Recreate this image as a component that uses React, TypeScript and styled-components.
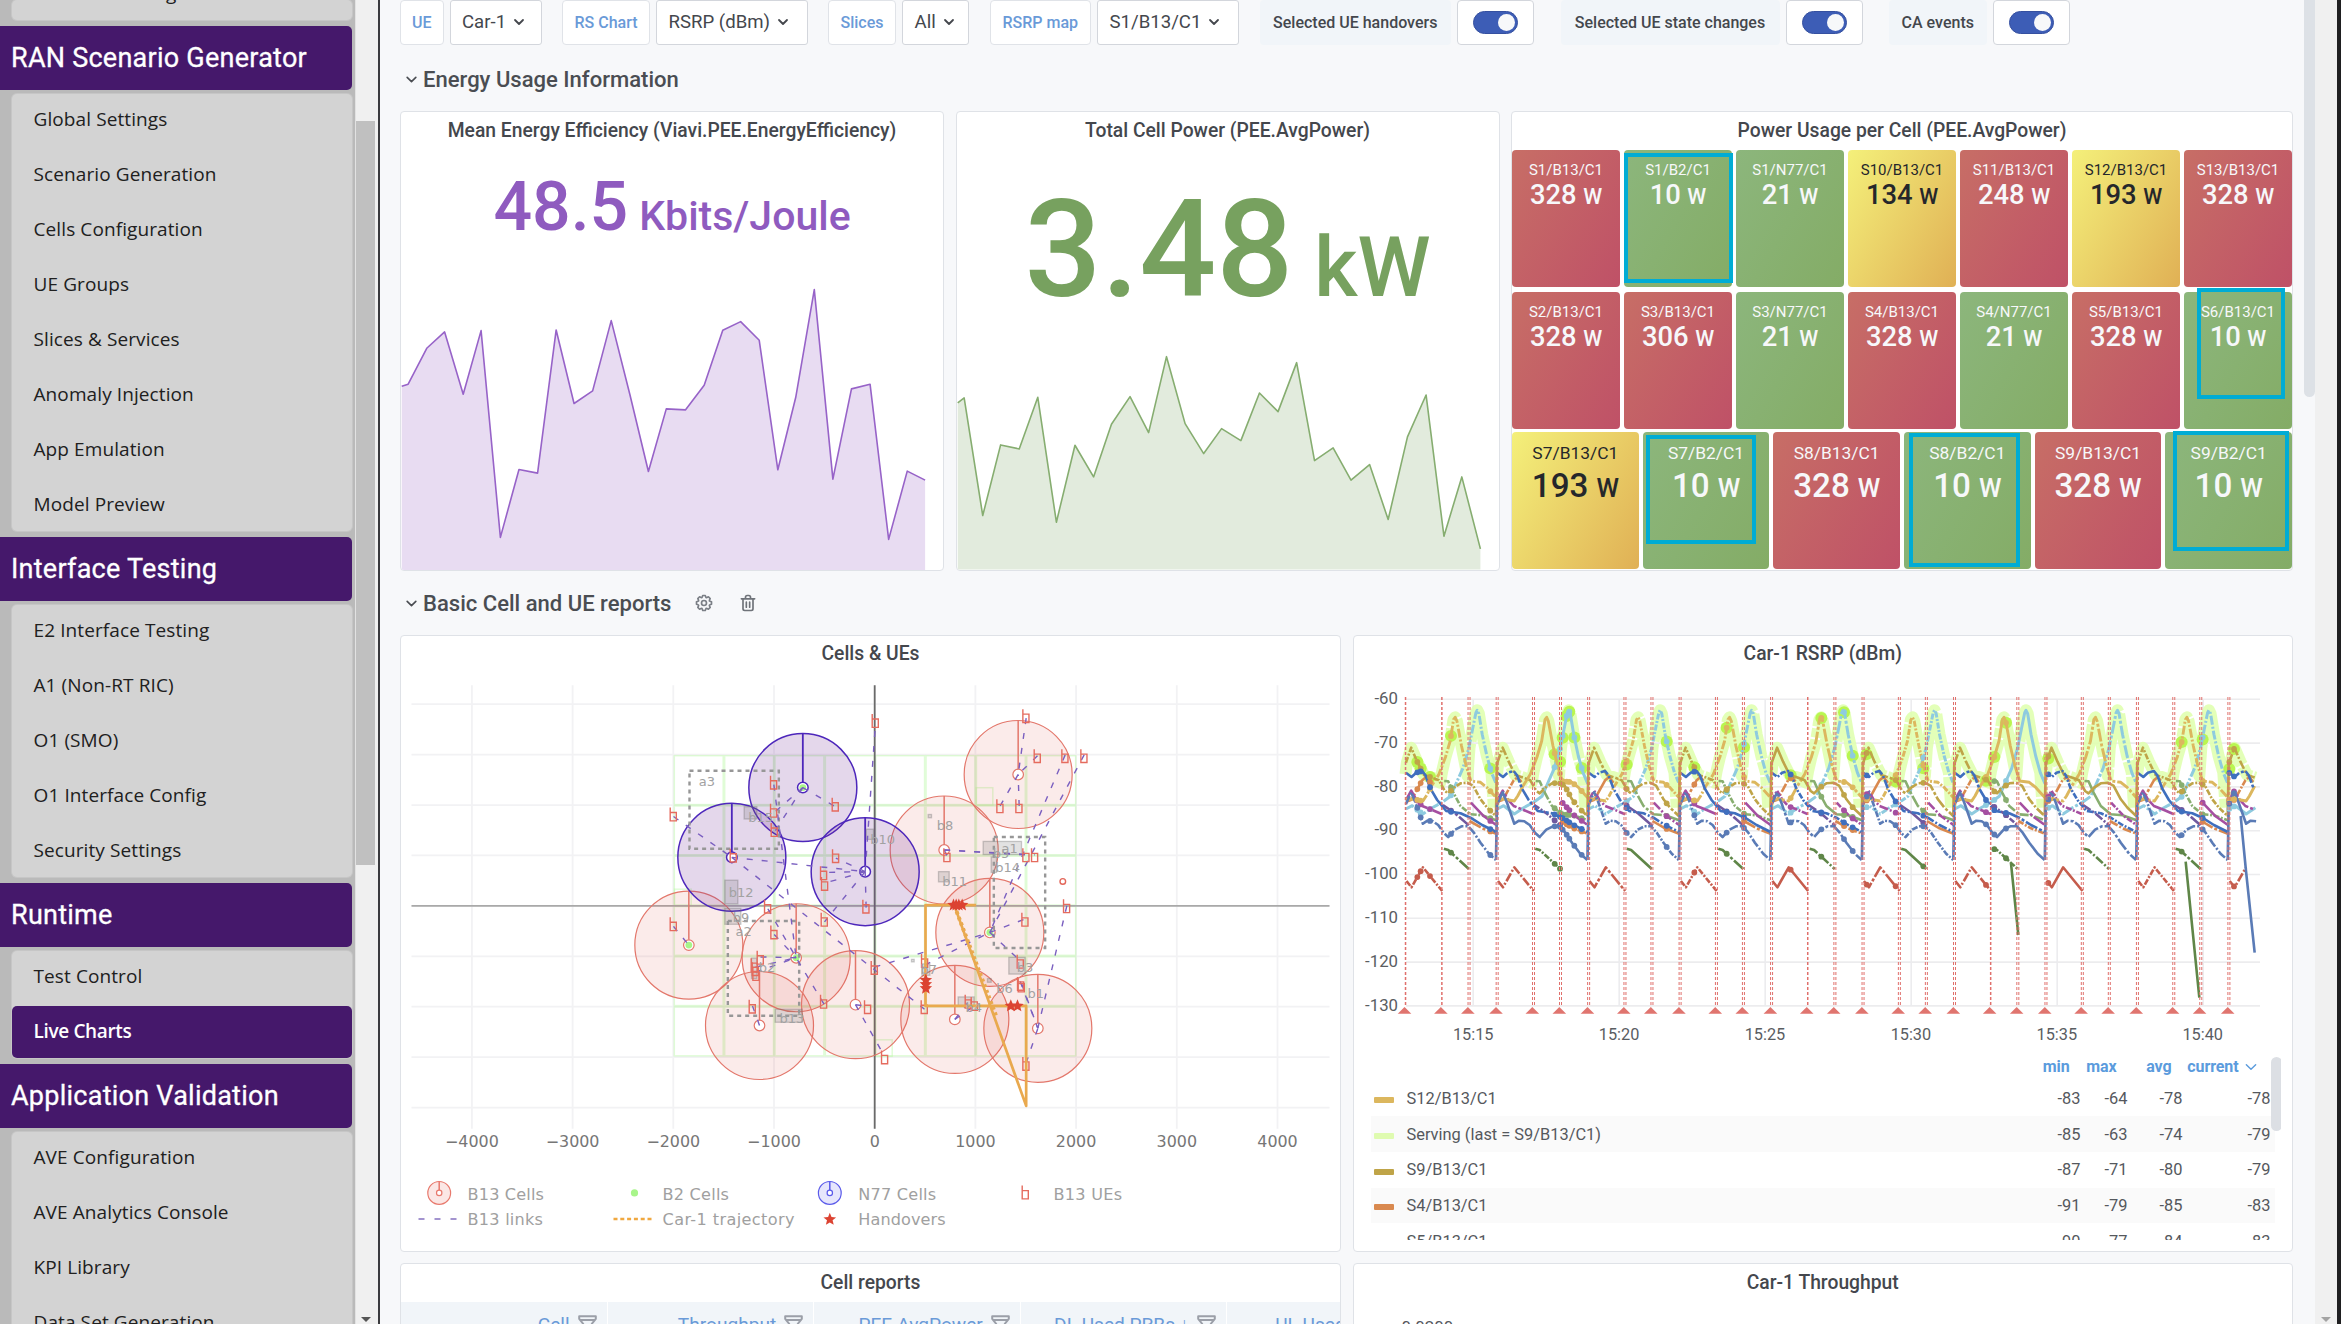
import React from "react";
import styled, { createGlobalStyle, css } from "styled-components";

const GlobalStyle = createGlobalStyle`
  * { box-sizing: border-box; }
  html, body { margin: 0; padding: 0; overflow: hidden; }
  body { background: #f7f8fa; font-family: Roboto, "Liberation Sans", sans-serif; color: #44474d; }
  svg { display: block; }
`;

const PURPLE = "#45186b";

const Page = styled.div`
  display: flex;
  width: 2341px;
  height: 1324px;
  overflow: hidden;
`;

/* ---------- Sidebar ---------- */

const Sidebar = styled.nav`
  flex: none;
  width: 355px;
  height: 1324px;
  overflow: hidden;
  background: #bababa;
  padding-right: 3px;
`;

const NavHeader = styled.h2`
  margin: 6px 0 4px;
  height: 64px;
  padding-left: 11px;
  display: flex;
  align-items: center;
  background: ${PURPLE};
  color: #fff;
  border-radius: 0 5px 5px 0;
  font-weight: 400;
  font-size: 27px;
  letter-spacing: 0.25px;
  -webkit-text-stroke: 0.3px #fff;
`;

const NavGroup = styled.ul<{ $tail?: boolean }>`
  list-style: none;
  margin: 0 0 0 12px;
  padding: 0;
  display: flex;
  flex-direction: column;
  gap: 3px;
  background: #d3d3d3;
  border-radius: 5px;
  box-shadow: 0 0 0 1px #c6c6c6;
  ${(p) => p.$tail && css`height: 20px; justify-content: flex-end; overflow: hidden;`}
`;

const NavItem = styled.li<{ $active?: boolean }>`
  flex: none;
  height: 52px;
  padding: 0 0 2px 21.5px;
  display: flex;
  align-items: center;
  font-family: "Open Sans", "Noto Sans", sans-serif;
  font-size: 19px;
  letter-spacing: 0.1px;
  color: #202020;
  ${(p) =>
    p.$active &&
    css`
      background: ${PURPLE};
      color: #fff;
      font-weight: 600;
      letter-spacing: -0.35px;
      border-radius: 5px;
    `}
`;

const SideScroll = styled.div`
  flex: none;
  width: 25px;
  height: 1324px;
  display: flex;
  flex-direction: column;
  align-items: center;
  padding: 121px 3px 0 0;
  background: #f0f0f0;
  border-left: 1px solid #e2e2e2;
  border-right: 2px solid #3a3a3e;
`;

const SideThumb = styled.div`
  width: 19px;
  height: 744px;
  background: #c0c0c0;
`;

const Arrow = styled.div<{ $color: string; $w: number }>`
  margin: auto 0 2px;
  border: ${(p) => p.$w}px solid transparent;
  border-top-color: ${(p) => p.$color};
  border-bottom: 0;
`;

/* ---------- Main ---------- */

const Main = styled.main`
  flex: none;
  width: 1924px;
  height: 1324px;
  overflow: hidden;
  padding: 0 10.5px 0 20px;
  background: #f7f8fa;
`;

const Toolbar = styled.div`
  display: flex;
  height: 45px;
  gap: 20.5px;
`;

const Field = styled.div<{ $gap?: number }>`
  display: flex;
  gap: 6px;
  margin-left: ${(p) => p.$gap ?? 0}px;
`;

const FieldLabel = styled.span<{ $w: number; $plain?: boolean }>`
  width: ${(p) => p.$w}px;
  height: 44.5px;
  display: flex;
  align-items: center;
  justify-content: center;
  border-radius: 4px;
  font-size: 16px;
  font-weight: 500;
  white-space: nowrap;
  ${(p) =>
    p.$plain
      ? css`background: #f1f5f9; color: #44474d;`
      : css`background: #fff; border: 1px solid #e0e3e8; color: #6a9ad8;`}
`;

const Select = styled.button<{ $w: number }>`
  width: ${(p) => p.$w}px;
  height: 44.5px;
  padding: 0 0 0 11.5px;
  display: flex;
  align-items: center;
  gap: 7px;
  background: #fff;
  border: 1.5px solid #d3d6dc;
  border-radius: 3px;
  font: 400 18.6px Roboto, sans-serif;
  color: #44474d;
  white-space: nowrap;
`;

const SwitchBox = styled.span`
  width: 77px;
  height: 44.5px;
  display: flex;
  align-items: center;
  justify-content: center;
  background: #fff;
  border: 1.5px solid #d3d6dc;
  border-radius: 4px;
`;

const Switch = styled.span`
  width: 45px;
  height: 23px;
  padding: 2px;
  display: flex;
  justify-content: flex-end;
  border-radius: 12px;
  background: #3d5db6;
  border: 1px solid #3550a0;
`;

const Knob = styled.span`
  width: 17px;
  height: 17px;
  border-radius: 50%;
  background: #f7f8fa;
`;

const SectionTitle = styled.h3<{ $h: number; $drop?: number }>`
  margin: 0;
  height: ${(p) => p.$h}px;
  padding: ${(p) => p.$drop ?? 0}px 0 0 5px;
  display: flex;
  align-items: center;
  gap: 5px;
  font-size: 22.05px;
  font-weight: 500;
  color: #4a4d52;
`;

const SectionIcons = styled.span`
  display: flex;
  gap: 24px;
  margin-left: 18px;
`;

const Row = styled.div<{ $h: number; $mb?: number }>`
  display: flex;
  gap: 11.5px;
  height: ${(p) => p.$h}px;
  margin-bottom: ${(p) => p.$mb ?? 0}px;
`;

const Panel = styled.section<{ $w: number }>`
  flex: none;
  width: ${(p) => p.$w}px;
  display: flex;
  flex-direction: column;
  background: #fff;
  border: 1.5px solid #dfe2e7;
  border-radius: 4px;
  overflow: hidden;
`;

const PanelTitle = styled.h4`
  margin: 0;
  flex: none;
  height: 38px;
  padding-bottom: 2px;
  display: flex;
  align-items: center;
  justify-content: center;
  font-size: 19.3px;
  font-weight: 500;
  color: #44474d;
`;

const BigValue = styled.div<{ $color: string; $size: number; $unit: number; $top: number; $gap: number }>`
  display: flex;
  justify-content: center;
  align-items: baseline;
  gap: ${(p) => p.$gap}px;
  margin-top: ${(p) => p.$top}px;
  line-height: 1;
  font-weight: 500;
  color: ${(p) => p.$color};
  font-size: ${(p) => p.$size}px;
  & > span { font-size: ${(p) => p.$unit}px; }
`;

const Spark = styled.svg`
  flex: none;
  width: 100%;
  margin-top: auto;
`;

/* ---------- Power tiles ---------- */

const TileRows = styled.div`
  display: flex;
  flex-direction: column;
`;

const TileRow = styled.div<{ $mb: number }>`
  display: flex;
  gap: 4px;
  height: 137px;
  margin-bottom: ${(p) => p.$mb}px;
`;

const tones = {
  r: css`background: linear-gradient(120deg, #c76e66, #bf5167); color: #f7f8fa;`,
  g: css`background: linear-gradient(120deg, #8cb67c, #84ac66); color: #f7f8fa;`,
  y: css`background: linear-gradient(120deg, #f4f07a, #e0b055); color: #25272b;`,
};

const Tile = styled.div<{ $tone: keyof typeof tones; $large?: boolean }>`
  position: relative;
  flex: 1;
  display: flex;
  flex-direction: column;
  align-items: center;
  border-radius: 4px;
  padding-top: ${(p) => (p.$large ? 10.5 : 11)}px;
  white-space: nowrap;
  ${(p) => tones[p.$tone]}
`;

const TileName = styled.div<{ $large?: boolean }>`
  font-size: ${(p) => (p.$large ? 17.4 : 15)}px;
  line-height: ${(p) => (p.$large ? 21 : 18)}px;
`;

const TileValue = styled.div<{ $large?: boolean }>`
  display: flex;
  align-items: baseline;
  gap: ${(p) => (p.$large ? 8 : 6.5)}px;
  margin-top: ${(p) => (p.$large ? 2 : 0)}px;
  font-weight: 500;
  font-size: ${(p) => (p.$large ? 33.2 : 27.4)}px;
  line-height: ${(p) => (p.$large ? 40 : 32)}px;
  & > span { font-size: ${(p) => (p.$large ? 25.5 : 21.5)}px; }
`;

const Highlight = styled.div<{ $box: number[] }>`
  position: absolute;
  left: ${(p) => p.$box[0]}px;
  top: ${(p) => p.$box[1]}px;
  width: ${(p) => p.$box[2]}px;
  height: ${(p) => p.$box[3]}px;
  border: 4.4px solid #00acd4;
`;

/* ---------- Legend table ---------- */

const LegendArea = styled.div`
  display: flex;
  height: 183px;
  margin: 0 11px 0 17px;
  overflow: hidden;
`;

const LegendTable = styled.div`
  flex: none;
  width: 904px;
`;

const LegendScroll = styled.div`
  flex: none;
  width: 11px;
  height: 74px;
  margin-left: -4px;
  border-radius: 6px;
  background: #dcdfe4;
`;

const LegendRow = styled.div<{ $odd?: boolean; $head?: boolean }>`
  display: grid;
  grid-template-columns: 36px 1fr 50px 47px 55px 88px 4px;
  align-items: center;
  height: ${(p) => (p.$head ? 20 : 35.7)}px;
  margin-bottom: ${(p) => (p.$head ? 4 : 0)}px;
  background: ${(p) => (p.$odd ? "#fafafa" : "transparent")};
  font-size: 16.4px;
  color: #55585d;
  & > b { text-align: right; font-weight: 400; }
  ${(p) =>
    p.$head &&
    css`
      grid-template-columns: 36px 1fr 50px 47px 55px 67px 25px;
      margin-left: -11px;
      margin-right: 11px;
      font-size: 16px;
      letter-spacing: -0.1px;
      color: #5b9bdd;
      & > b { font-weight: 700; }
      & > span { padding-left: 5px; }
    `}
`;

const Swatch = styled.i<{ $c: string }>`
  width: 20px;
  height: 6px;
  margin: 4px 0 0 3px;
  border-radius: 1px;
  background: ${(p) => p.$c};
`;

/* ---------- Reports table ---------- */

const ReportHead = styled.div`
  display: flex;
  flex: none;
  width: 1200px;
  height: 60px;
  background: #f1f5f9;
`;

const ReportCell = styled.div`
  flex: none;
  width: 206.6px;
  padding: 9px 10px 0 0;
  display: flex;
  justify-content: flex-end;
  gap: 8px;
  border-right: 1.5px solid #fff;
  font-size: 19.1px;
  line-height: 27px;
  color: #6a9ad8;
  white-space: nowrap;
  & > svg { margin-top: 4px; }
`;

const ThroughputTick = styled.div`
  padding: 15px 0 0 48px;
  font-size: 16.8px;
  line-height: 20px;
  color: #55585d;
`;

/* ---------- Right edge ---------- */

const DashScroll = styled.div`
  flex: none;
  width: 11px;
  height: 397px;
  background: #dde1e6;
  border-radius: 0 0 6px 6px;
`;

const WindowScroll = styled.div`
  flex: none;
  width: 26px;
  height: 1324px;
  display: flex;
  flex-direction: column;
  align-items: center;
  background: #f0f0f0;
  border-right: 4px solid #1f1f21;
`;

/* ---------- Icons ---------- */

const Caret = ({ size = 12, w = 1.8 }: { size?: number; w?: number }) => (
  <svg width={size} height={size} viewBox="0 0 12 12" fill="none" stroke="currentColor" strokeWidth={w} strokeLinecap="round" strokeLinejoin="round">
    <path d="M2 4l4 4 4-4" />
  </svg>
);

const Gear = () => (
  <svg width="20" height="20" viewBox="0 0 24 24" fill="#7b7f86">
    <path d="M21.32,9.55l-1.89-.63.89-1.78A1,1,0,0,0,20.13,6L18,3.87a1,1,0,0,0-1.15-.19l-1.78.89-.63-1.89A1,1,0,0,0,13.5,2h-3a1,1,0,0,0-.95.68L8.92,4.57,7.14,3.68A1,1,0,0,0,6,3.87L3.87,6a1,1,0,0,0-.19,1.15l.89,1.78-1.89.63A1,1,0,0,0,2,10.5v3a1,1,0,0,0,.68.95l1.89.63-.89,1.78A1,1,0,0,0,3.87,18L6,20.13a1,1,0,0,0,1.15.19l1.78-.89.63,1.89a1,1,0,0,0,.95.68h3a1,1,0,0,0,.95-.68l.63-1.89,1.78.89A1,1,0,0,0,18,20.13L20.13,18a1,1,0,0,0,.19-1.15l-.89-1.78,1.89-.63A1,1,0,0,0,22,13.5v-3A1,1,0,0,0,21.32,9.55ZM20,12.78l-1.2.4A2,2,0,0,0,17.64,16l.57,1.14-1.1,1.1L16,17.64a2,2,0,0,0-2.79,1.16l-.4,1.2H11.22l-.4-1.2A2,2,0,0,0,8,17.64l-1.14.57-1.1-1.1L6.36,16A2,2,0,0,0,5.2,13.18L4,12.78V11.22l1.2-.4A2,2,0,0,0,6.36,8L5.79,6.89l1.1-1.1L8,6.36A2,2,0,0,0,10.82,5.2l.4-1.2h1.56l.4,1.2A2,2,0,0,0,16,6.36l1.14-.57,1.1,1.1L17.64,8a2,2,0,0,0,1.16,2.79l1.2.4ZM12,8a4,4,0,1,0,4,4A4,4,0,0,0,12,8Zm0,6a2,2,0,1,1,2-2A2,2,0,0,1,12,14Z" />
  </svg>
);

const Trash = () => (
  <svg width="20" height="20" viewBox="0 0 24 24" fill="#6f7379">
    <path d="M10,18a1,1,0,0,0,1-1V11a1,1,0,0,0-2,0v6A1,1,0,0,0,10,18ZM20,6H16V5a3,3,0,0,0-3-3H11A3,3,0,0,0,8,5V6H4A1,1,0,0,0,4,8H5V19a3,3,0,0,0,3,3h8a3,3,0,0,0,3-3V8h1a1,1,0,0,0,0-2ZM10,5a1,1,0,0,1,1-1h2a1,1,0,0,1,1,1V6H10Zm7,14a1,1,0,0,1-1,1H8a1,1,0,0,1-1-1V8H17Zm-3-1a1,1,0,0,0,1-1V11a1,1,0,0,0-2,0v6A1,1,0,0,0,14,18Z" />
  </svg>
);

const Filter = () => (
  <svg width="19" height="19" viewBox="0 0 19 19" fill="none" stroke="#9b9fa8" strokeWidth="2" strokeLinejoin="round">
    <path d="M1.2 1.2h16.6v2.6l-4 5v7l-8.6 0v-7l-4-5zM1.2 5h16.6" />
  </svg>
);

/* ---------- Sparkline data ---------- */

const efficiency = "17,856 26,850 52,742 77,693 103,880 128,689 155,1310 181,1106 207,1117 233,687 258,908 284,870 310,659 336,880 362,1112 387,924 414,927 440,853 466,688 491,662 517,718 543,1107 568,890 594,566 620,1135 646,864 672,850 698,1316 724,1111 749,1138";
const cellPower = "795,908 804,893 830,1246 855,1034 881,1046 907,891 933,1266 959,1035 985,1130 1010,972 1036,889 1062,997 1087,769 1113,970 1139,1060 1164,985 1191,1021 1217,878 1243,934 1269,787 1294,1081 1320,1043 1345,1140 1371,1093 1397,1258 1424,1010 1450,884 1475,1308 1500,1130 1526,1346";

const Sparkline = ({ pts, x0, x1, top, h, fill, line }: { pts: string; x0: number; x1: number; top: number; h: number; fill: string; line: string }) => (
  <Spark height={h} viewBox={`${x0 - 1} ${top} 758 ${1408 - top}`} preserveAspectRatio="none">
    <polygon points={`${x0},1408 ${pts} ${x1},1408`} fill={fill} />
    <polyline points={pts} fill="none" stroke={line} strokeWidth="1.6" strokeLinejoin="round" vectorEffect="non-scaling-stroke" />
  </Spark>
);

/* ---------- Tiles ---------- */

type TileData = [string, string, keyof typeof tones, number[]?];

const tileRows: TileData[][] = [
  [
    ["S1/B13/C1", "328", "r"], ["S1/B2/C1", "10", "g", [0, 3, 109, 130]], ["S1/N77/C1", "21", "g"], ["S10/B13/C1", "134", "y"],
    ["S11/B13/C1", "248", "r"], ["S12/B13/C1", "193", "y"], ["S13/B13/C1", "328", "r"],
  ],
  [
    ["S2/B13/C1", "328", "r"], ["S3/B13/C1", "306", "r"], ["S3/N77/C1", "21", "g"], ["S4/B13/C1", "328", "r"],
    ["S4/N77/C1", "21", "g"], ["S5/B13/C1", "328", "r"], ["S6/B13/C1", "10", "g", [12.5, -4, 88, 111]],
  ],
  [
    ["S7/B13/C1", "193", "y"], ["S7/B2/C1", "10", "g", [3, 3, 110.5, 109]], ["S8/B13/C1", "328", "r"],
    ["S8/B2/C1", "10", "g", [4.5, 1, 111, 134]], ["S9/B13/C1", "328", "r"], ["S9/B2/C1", "10", "g", [7.5, -1, 116, 120]],
  ],
];

/* ---------- Cells & UEs map ---------- */

type P = [number, number];
// Left and right halves of the map are digitised from different origins.
const L = (x: number, y: number): P => [400 + x / 3, 620 + y / 2.45];
const R = (x: number, y: number): P => [850 + x / 3, 620 + y / 2.45];

const A = L(1210, 410), B = L(997, 581), C = L(1397, 616), D = L(868, 796), E = L(1190, 827), F = L(1080, 993), G = L(1368, 942);
const H = R(506, 378), I = R(284, 563), J = R(421, 765), K = R(316, 978), M = R(565, 1000);

const b13Cells: P[] = [D, E, F, G, H, I, J, K, M];
const n77Cells: P[] = [A, B, C];
const b2Cells: P[] = [A, D, E, J];

const ues: P[] = [
  ...([[1428, 252], [1123, 403], [822, 481], [1123, 472], [1125, 519], [1308, 457], [1002, 582], [1309, 583], [1273, 625], [1276, 651], [1400, 707], [1105, 707], [1275, 739], [822, 750], [1124, 770], [1083, 832], [1068, 860], [1070, 872], [1065, 850], [1059, 952], [1273, 940], [1425, 857], [1405, 953], [1456, 1076]] as P[]).map(([x, y]) => L(x, y)),
  ...([[530, 240], [564, 338], [647, 338], [704, 338], [452, 461], [509, 461], [293, 581], [530, 581], [556, 581], [652, 706], [527, 739], [226, 840], [513, 842], [516, 900], [514, 896], [357, 940], [375, 945], [225, 953], [530, 1092]] as P[]).map(([x, y]) => R(x, y)),
];

const links: [P, P][] = [
  [L(822, 481), B], [B, C], [B, R(225, 953)], [A, L(1308, 457)], [A, L(1123, 472)], [A, L(1125, 519)], [L(1123, 403), E],
  [C, L(1309, 583)], [C, L(1273, 618)], [C, L(1276, 644)], [C, L(1275, 739)], [C, L(1400, 707)], [C, L(1428, 252)],
  [L(822, 750), D], [L(1105, 707), E], [L(1124, 770), E], [L(1083, 825), E], [L(1068, 850), E], [L(1068, 862), E], [L(1273, 940), E],
  [F, L(1059, 945)], [G, L(1405, 946)], [G, L(1456, 1070)], [R(75, 850), J], [J, R(527, 732)], [R(226, 845), J], [R(704, 330), J],
  [R(647, 330), J], [J, R(513, 835)], [R(530, 240), H], [R(564, 332), H], [R(452, 455), H], [R(509, 455), H], [I, R(293, 578)],
  [I, R(556, 575)], [I, R(530, 575)], [R(652, 700), M], [R(516, 890), M], [R(512, 885), M], [R(530, 1085), M], [K, R(357, 935)], [K, R(375, 945)],
];

const mapLabels: [string, P][] = [
  ["a3", L(898, 406)], ["b15", L(1046, 495)], ["b12", L(988, 677)], ["b9", L(1000, 740)], ["a2", L(1008, 773)], ["b2", L(1078, 861)],
  ["b13", L(1140, 987)], ["b10", L(1412, 548)], ["b8", R(262, 514)], ["a1", R(456, 570)], ["b5", R(430, 583)], ["b14", R(437, 616)],
  ["b11", R(278, 652)], ["b7", R(213, 868)], ["b3", R(502, 862)], ["b6", R(440, 913)], ["b1", R(534, 926)], ["b4", R(348, 959)],
];

const blocks: [P, P][] = [
  [L(1034, 457), L(1072, 487)], [L(976, 637), L(1015, 695)], [L(976, 706), L(1024, 745)], [L(1127, 953), L(1208, 985)],
  [L(1400, 512), L(1422, 537)], [L(1056, 828), L(1072, 878)], [R(401, 542), R(516, 574)], [R(425, 580), R(441, 618)],
  [R(267, 616), R(299, 641)], [R(478, 826), R(527, 867)], [R(326, 923), R(374, 945)], [R(217, 842), R(241, 870)],
  [R(236, 476), R(246, 484)], [R(186, 831), R(194, 837)], [R(414, 878), R(425, 887)],
];

const areas: [P, P][] = [
  [L(870, 369), L(1138, 560)], [L(985, 737), L(1199, 969)], [R(433, 531), R(587, 803)],
];

const handovers: P[] = [R(312, 698), R(320, 698), R(328, 698), R(338, 698), R(229, 882), R(229, 892), R(229, 902), R(484, 945), R(504, 945)];

const star = ([x, y]: P, r = 6.6) =>
  Array.from({ length: 10 }, (_, i) => {
    const a = -Math.PI / 2 + (i * Math.PI) / 5;
    const q = i % 2 ? r * 0.45 : r;
    return `${(x + q * Math.cos(a)).toFixed(1)},${(y + q * Math.sin(a)).toFixed(1)}`;
  }).join(" ");

const CellMark = ({ at: [x, y], r, inner, stroke, fill, w = 1.2 }: { at: P; r: number; inner: number; stroke: string; fill: string; w?: number }) => (
  <g stroke={stroke} strokeWidth={w} fill={fill}>
    <circle cx={x} cy={y} r={r} />
    <line x1={x} x2={x} y1={y - r} y2={y - inner} strokeWidth={w + 0.3} />
    <circle cx={x} cy={y} r={inner} fill="#fff" />
  </g>
);

const UeMark = ({ at: [x, y] }: { at: P }) => (
  <path d={`M${x - 3.3} ${y - 9}V${y + 4.3}H${x + 2.8}V${y - 4}H${x - 3.3}`} fill="none" stroke="#e56b5e" strokeWidth="1.4" />
);

const Txt = styled.text<{ $size: number; $c: string; $font?: string; $anchor?: string }>`
  font-family: ${(p) => p.$font ?? `"DejaVu Sans"`}, sans-serif;
  font-size: ${(p) => p.$size}px;
  fill: ${(p) => p.$c};
  text-anchor: ${(p) => p.$anchor ?? "start"};
`;

const gridX = [-4000, -3000, -2000, -1000, 0, 1000, 2000, 3000, 4000];
const mx = (v: number) => 875.2 + v * 0.1007;

const mapLegend: [string, number, number, number][] = [
  ["B13 Cells", 468, 1199.4, 76.5], ["B2 Cells", 663, 1199.4, 66.5], ["N77 Cells", 858.7, 1199.4, 78], ["B13 UEs", 1054, 1199.4, 68.7],
  ["B13 links", 468, 1225, 75.5], ["Car-1 trajectory", 663, 1225, 132], ["Handovers", 858.7, 1225, 87.5],
];

const CellMap = () => (
  <svg width="938" height="573" viewBox="401.5 673.8 938 573">
    <g stroke="#f2f2f4" strokeWidth="1.8">
      {gridX.map((v) => <line key={v} x1={mx(v)} x2={mx(v)} y1="685" y2="1128.5" />)}
      {Array.from({ length: 9 }, (_, i) => <line key={i} x1="412" x2="1330" y1={704 + i * 50.42} y2={704 + i * 50.42} />)}
    </g>
    <g fill="none" stroke="#b4f7a0" strokeOpacity=".42" strokeWidth="1.5">
      {Array.from({ length: 48 }, (_, i) => (
        <rect key={i} x={674.8 + (i % 8) * 50.35} y={755.5 + Math.floor(i / 8) * 50.25} width="48.9" height="48.9" />
      ))}
      <rect x="976.7" y="787.5" width="16.6" height="17.5" />
      <rect x="876" y="1039.6" width="16.7" height="16.5" />
      <rect x="675" y="889" width="16.7" height="16.5" />
    </g>
    <line x1="412" x2="1330" y1="905.7" y2="905.7" stroke="#a9a9a9" strokeWidth="1.8" />
    <line x1="875.2" x2="875.2" y1="685" y2="1128.5" stroke="#6a6a6a" strokeWidth="1.8" />
    {b13Cells.map((p, i) => <CellMark key={i} at={p} r={54} inner={5.3} stroke="#e3776b" fill="rgba(220,70,60,.11)" />)}
    {n77Cells.map((p, i) => <CellMark key={i} at={p} r={54} inner={5.3} stroke="#4d27bb" fill="rgba(110,40,150,.19)" w={1.5} />)}
    {b2Cells.map(([x, y], i) => <circle key={i} cx={x} cy={y} r="3.4" fill="#a8f58a" />)}
    <circle cx="1063.3" cy="881.2" r="2.8" fill="#fff" stroke="#e3675a" strokeWidth="1.4" />
    {blocks.map(([a, b], i) => (
      <rect key={i} x={a[0]} y={a[1]} width={b[0] - a[0]} height={b[1] - a[1]} fill="rgba(110,110,110,.2)" stroke="rgba(110,110,110,.35)" strokeWidth="1.3" />
    ))}
    {areas.map(([a, b], i) => (
      <rect key={i} x={a[0]} y={a[1]} width={b[0] - a[0]} height={b[1] - a[1]} fill="none" stroke="#979797" strokeWidth="2.4" strokeDasharray="4 4" />
    ))}
    <g stroke="#7a5fc0" strokeWidth="1.4" strokeDasharray="6 9">
      {links.map(([a, b], i) => <line key={i} x1={a[0]} y1={a[1]} x2={b[0]} y2={b[1]} />)}
    </g>
    {ues.map((p, i) => <UeMark key={i} at={p} />)}
    <polyline
      points={[R(380, 698), R(228, 698), R(228, 945), R(530, 945), R(530, 1190), R(315, 700)].map((p) => p.join()).join(" ")}
      fill="none" stroke="#e9a94e" strokeWidth="2.7" strokeLinejoin="round"
    />
    <polyline points={[R(315, 700), R(440, 970)].map((p) => p.join()).join(" ")} fill="none" stroke="#e9a94e" strokeWidth="4" strokeDasharray="3 3" />
    {handovers.map((p, i) => <polygon key={i} points={star(p)} fill="#dc4332" />)}
    {mapLabels.map(([t, p]) => <Txt key={t} x={p[0]} y={p[1]} $size={13} $c="#a2a2a2">{t}</Txt>)}
    {gridX.map((v) => (
      <Txt key={v} x={mx(v)} y="1147.3" $size={15.9} $c="#767676" $anchor="middle">{String(v).replace("-", "−")}</Txt>
    ))}
    <CellMark at={[439.7, 1192.7]} r={11.4} inner={2.7} stroke="#e8796d" fill="#fbe7e5" />
    <circle cx="635" cy="1192.7" r="3.6" fill="#a8f58a" />
    <CellMark at={[830.3, 1192.7]} r={11.4} inner={2.7} stroke="#5a5aea" fill="#e6e6fc" />
    <UeMark at={[1026, 1194.4]} />
    <line x1="419" x2="458" y1="1218.8" y2="1218.8" stroke="#a394cf" strokeWidth="1.9" strokeDasharray="6 10" />
    <line x1="614" x2="652" y1="1218.8" y2="1218.8" stroke="#f0a840" strokeWidth="2.4" strokeDasharray="4 2.8" />
    <polygon points={star([830.3, 1219.2])} fill="#dc4332" />
    {mapLegend.map(([t, x, y, len]) => (
      <Txt key={t} x={x} y={y} textLength={len} $size={16.1} $c="#a0a0a0">{t}</Txt>
    ))}
  </svg>
);

/* ---------- RSRP chart ---------- */

// Chart units are thirds of a pixel; one loop of the car lasts PERIOD units.
const PERIOD = 274.4;
const START = 166.6;
const END = 2730;

type Series = { c: string; segs: P[][]; jump?: boolean; w?: number };

const S9: P[] = [[1, 395], [17, 350], [35, 392], [55, 432], [80, 440], [100, 448], [118, 480], [128, 487], [145, 470], [165, 457], [185, 455], [203, 464], [225, 505], [245, 530], [272, 556]];
const S12: P[] = [[1, 505], [20, 504], [52, 510], [62, 495], [78, 465], [100, 430], [120, 378], [134, 330], [144, 266], [149, 259], [154, 270], [168, 345], [182, 405], [196, 450], [225, 454], [245, 470], [272, 500]];
const LB: P[] = [[1, 534], [20, 524], [52, 549], [80, 530], [110, 514], [135, 496], [155, 450], [172, 412], [190, 350], [203, 285], [211, 245], [215, 238], [220, 248], [230, 310], [244, 375], [258, 425], [272, 458]];

const series: Series[] = [
  { c: "#8ecbdf", segs: [LB], w: 3 },
  { c: "#88ae70", segs: [[[116, 450], [128, 451], [145, 488], [165, 525], [195, 550], [230, 553], [272, 568]]] },
  { c: "#d9894f", segs: [[[1, 512], [18, 506], [35, 475], [50, 448], [62, 438], [75, 455]], [[192, 570], [230, 592], [272, 608]]] },
  { c: "#a54fa1", segs: [[[1, 508], [17, 479], [32, 505], [50, 525], [75, 535], [110, 550]], [[196, 515], [235, 556], [272, 582]]] },
  { c: "#dcb75e", segs: [S12], w: 2.9 },
  { c: "#bfa448", segs: [S9], jump: true },
  { c: "#70599f", segs: [[[112, 522], [150, 548], [192, 585]]] },
  { c: "#3f6fbe", segs: [[[1, 425], [18, 438], [32, 425], [50, 420], [60, 433], [75, 473], [95, 507], [122, 540], [165, 547], [195, 560], [230, 582], [272, 603]]] },
  { c: "#5a7bb6", segs: [[[1, 520], [17, 484], [30, 515], [52, 578], [66, 569], [82, 571], [98, 582], [114, 605], [128, 618], [148, 596], [168, 586], [188, 586], [205, 605], [225, 635], [250, 668], [271, 687]]], jump: true },
  { c: "#c55c4c", segs: [[[3, 750], [18, 769], [52, 709], [110, 780]]] },
  { c: "#5f8648", segs: [[[115, 653], [128, 657], [190, 714]]] },
];

const serving: P[] = [[0, 430], [4, 395], [17, 350], [35, 392], [55, 432], [80, 440], [104, 455], [110, 420], [120, 378], [134, 330], [144, 266], [149, 259], [154, 270], [168, 345], [186, 435], [192, 350], [203, 285], [211, 245], [215, 238], [220, 248], [230, 310], [244, 375], [258, 425], [265, 530]];

const markers = [202, 212, 240, 303, 421, 614, 630, 638, 650, 658, 673, 695, 830, 950, 1033, 1130, 1182, 1322, 1414, 1482, 1508, 1550, 1637, 1720, 1908, 1933, 1968, 2095, 2495, 2558, 2638, 2652];

const cycles = Array.from({ length: 10 }, (_, k) => START + k * PERIOD);
const sx = (x: number) => 1350 + x / 3;
const sy = (y: number) => 630 + y / 3;

const clip = (seg: P[], x0: number): string =>
  seg.filter(([x]) => x + x0 <= END).map(([x, y]) => `${sx(x + x0).toFixed(1)},${sy(y).toFixed(1)}`).join(" ");

const valueAt = (seg: P[], x: number): number | null => {
  for (let i = 1; i < seg.length; i++) {
    const [a, b] = [seg[i - 1], seg[i]];
    if (x >= a[0] && x <= b[0]) return a[1] + ((b[1] - a[1]) * (x - a[0])) / (b[0] - a[0]);
  }
  return null;
};

const dashes = ["9 2 2 2", undefined, "13 2 3 2", "6 1.6 2 1.6"];
const eventLines = cycles.flatMap((x) => [x, x + 109, x + 190]).filter((x) => x < 2700);
const singles = [0, 1, 13, 19];

const RsrpChart = () => (
  <svg width="937" height="383" viewBox="1354 673 937 383">
    <g stroke="#ececee" strokeWidth="1.6">
      {Array.from({ length: 8 }, (_, i) => <line key={i} x1="1406" x2="2260" y1={698.3 + i * 43.8} y2={698.3 + i * 43.8} />)}
      {Array.from({ length: 6 }, (_, i) => <line key={i} x1={1473.2 + i * 146} x2={1473.2 + i * 146} y1="698" y2="1005" />)}
    </g>
    <g fill="none" stroke="#dfffae" strokeOpacity=".88" strokeWidth="12" strokeLinejoin="round">
      {cycles.map((x, k) => (
        <polyline key={k} points={clip(serving, x)} strokeDasharray={k % 2 ? "46 2 14 2 9 2 60 2" : "120 2 9 2 11 2 90 2"} />
      ))}
    </g>
    {markers.map((m) => {
      const y = valueAt(serving, (m - START) % PERIOD);
      return y === null ? null : <circle key={m} cx={sx(m)} cy={sy(y)} r="6" fill="#b9f650" />;
    })}
    <g fill="none" strokeWidth="2.6" strokeLinejoin="round">
      {series.map((s, n) => cycles.map((x, k) => s.segs.map((seg, j) => (
        <polyline key={`${n}-${k}-${j}`} points={clip(seg, x)} stroke={s.c} strokeWidth={s.w} strokeDasharray={dashes[(n * 3 + k + (k >> 1)) % 4]} />
      ))))}
      {series.filter((s) => s.jump).map((s) => cycles.slice(1).map((x) => (
        <polyline
          key={s.c + x}
          points={`${sx(x - 3)},${sy(s.segs[0][s.segs[0].length - 1][1])} ${sx(x)},${sy(s.segs[0][0][1])} ${sx(x + 1)},${sy(s.segs[0][0][1])}`}
          stroke={s.c} strokeWidth="2.7"
        />
      )))}
    </g>
    {series.map((s) => markers.map((m) => s.segs.map((seg, j) => {
      const y = valueAt(seg, (m - START) % PERIOD);
      return y === null ? null : <circle key={s.c + m + j} cx={sx(m)} cy={sy(y)} r="2.9" fill={s.c} />;
    })))}
    <g fill="none" strokeWidth="2.6">
      <path d={`M${sx(1983)} ${sy(697)}L${sx(2005)} ${sy(912)}M${sx(2507)} ${sy(692)}L${sx(2548)} ${sy(1100)}`} stroke="#5f8648" />
      <path d={`M${sx(2672)} ${sy(555)}L${sx(2688)} ${sy(720)}L${sx(2714)} ${sy(965)}`} stroke="#5a7bb6" />
    </g>
    <g stroke="#e0706c" strokeDasharray="3 2">
      {eventLines.map((x, i) =>
        singles.includes(i) ? (
          <line key={i} x1={sx(x)} x2={sx(x)} y1="696" y2="1006" strokeWidth="1.5" />
        ) : (
          <React.Fragment key={i}>
            <line x1={sx(x - 2.5)} x2={sx(x - 2.5)} y1="696" y2="1006" />
            <line x1={sx(x + 3.5)} x2={sx(x + 3.5)} y1="696" y2="1006" />
          </React.Fragment>
        )
      )}
    </g>
    {eventLines.map((x, i) => <polygon key={i} points={`${sx(x - 3) - 6.8},1012.8 ${sx(x - 3)},1006 ${sx(x - 3) + 6.8},1012.8`} fill="#e0756f" />)}
    {[-60, -70, -80, -90, -100, -110, -120, -130].map((v, i) => (
      <Txt key={v} x="1398" y={702.8 + i * 43.85} $size={16.8} $c="#5a5d62" $font="Roboto" $anchor="end">{v}</Txt>
    ))}
    {["15:15", "15:20", "15:25", "15:30", "15:35", "15:40"].map((t, i) => (
      <Txt key={t} x={1473.2 + i * 145.9} y="1038.8" $size={16.3} $c="#5a5d62" $font="Roboto" $anchor="middle">{t}</Txt>
    ))}
  </svg>
);

/* ---------- App ---------- */

const nav: [string, string[]][] = [
  ["RAN Scenario Generator", ["Global Settings", "Scenario Generation", "Cells Configuration", "UE Groups", "Slices & Services", "Anomaly Injection", "App Emulation", "Model Preview"]],
  ["Interface Testing", ["E2 Interface Testing", "A1 (Non-RT RIC)", "O1 (SMO)", "O1 Interface Config", "Security Settings"]],
  ["Runtime", ["Test Control", "Live Charts"]],
  ["Application Validation", ["AVE Configuration", "AVE Analytics Console", "KPI Library", "Data Set Generation"]],
];

const selects: [string, number, string, number][] = [
  ["UE", 43.5, "Car-1", 92], ["RS Chart", 88, "RSRP (dBm)", 151.5], ["Slices", 68, "All", 67], ["RSRP map", 101.5, "S1/B13/C1", 142],
];

const switches: [string, number][] = [["Selected UE handovers", 191.5], ["Selected UE state changes", 219], ["CA events", 97.5]];

const legend: [string, string, number[]][] = [
  ["#dcb75e", "S12/B13/C1", [-83, -64, -78, -78]],
  ["#dffbb0", "Serving (last = S9/B13/C1)", [-85, -63, -74, -79]],
  ["#bfa448", "S9/B13/C1", [-87, -71, -80, -79]],
  ["#d9894f", "S4/B13/C1", [-91, -79, -85, -83]],
  ["transparent", "S5/B13/C1", [-90, -77, -84, -83]],
];

export default function App() {
  return (
    <Page>
      <GlobalStyle />
      <Sidebar>
        <NavGroup $tail><NavItem>Scenario Management</NavItem></NavGroup>
        {nav.map(([title, items]) => (
          <React.Fragment key={title}>
            <NavHeader>{title}</NavHeader>
            <NavGroup>
              {items.map((t) => <NavItem key={t} $active={t === "Live Charts"}>{t}</NavItem>)}
            </NavGroup>
          </React.Fragment>
        ))}
      </Sidebar>
      <SideScroll>
        <SideThumb />
        <Arrow $color="#555" $w={5} />
      </SideScroll>
      <Main>
        <Toolbar>
          {selects.map(([label, lw, value, vw]) => (
            <Field key={label}>
              <FieldLabel $w={lw}>{label}</FieldLabel>
              <Select $w={vw}>{value}<Caret /></Select>
            </Field>
          ))}
          {switches.map(([label, w], i) => (
            <Field key={label} $gap={i ? 6 : 0}>
              <FieldLabel $plain $w={w}>{label}</FieldLabel>
              <SwitchBox><Switch><Knob /></Switch></SwitchBox>
            </Field>
          ))}
        </Toolbar>
        <SectionTitle $h={66} $drop={3}><Caret size={13} w={1.5} />Energy Usage Information</SectionTitle>
        <Row $h={459.5}>
          <Panel $w={544}>
            <PanelTitle>Mean Energy Efficiency (Viavi.PEE.EnergyEfficiency)</PanelTitle>
            <BigValue $color="#8f5bbf" $size={68} $unit={41} $top={23} $gap={11}>48.5<span>Kbits/Joule</span></BigValue>
            <Sparkline pts={efficiency} x0={17} x1={749} top={552} h={285} fill="#e8dcf2" line="#9763c8" />
          </Panel>
          <Panel $w={544}>
            <PanelTitle>Total Cell Power (PEE.AvgPower)</PanelTitle>
            <BigValue $color="#77a15f" $size={135.5} $unit={83} $top={32} $gap={21}>3.48<span>kW</span></BigValue>
            <Sparkline pts={cellPower} x0={795} x1={1526} top={752} h={218.5} fill="#e2ebdd" line="#86ad70" />
          </Panel>
          <Panel $w={782}>
            <PanelTitle>Power Usage per Cell (PEE.AvgPower)</PanelTitle>
            <TileRows>
              {tileRows.map((row, r) => (
                <TileRow key={r} $mb={r === 0 ? 5 : 3}>
                  {row.map(([name, value, tone, box]) => (
                    <Tile key={name} $tone={tone} $large={r === 2}>
                      <TileName $large={r === 2}>{name}</TileName>
                      <TileValue $large={r === 2}>{value}<span>W</span></TileValue>
                      {box && <Highlight $box={box} />}
                    </Tile>
                  ))}
                </TileRow>
              ))}
            </TileRows>
          </Panel>
        </Row>
        <SectionTitle $h={64} $drop={1}>
          <Caret size={13} w={1.5} />Basic Cell and UE reports
          <SectionIcons><Gear /><Trash /></SectionIcons>
        </SectionTitle>
        <Row $h={617} $mb={11.5}>
          <Panel $w={941}>
            <PanelTitle>Cells &amp; UEs</PanelTitle>
            <CellMap />
          </Panel>
          <Panel $w={940.5}>
            <PanelTitle>Car-1 RSRP (dBm)</PanelTitle>
            <RsrpChart />
            <LegendArea>
              <LegendTable>
                <LegendRow $head>
                  <i /><span /><b>min</b><b>max</b><b>avg</b><b>current</b><span><Caret size={14} w={1.2} /></span>
                </LegendRow>
                {legend.map(([c, name, vals], i) => (
                  <LegendRow key={name} $odd={i % 2 === 1}>
                    <Swatch $c={c} /><span>{name}</span>
                    {vals.map((v, j) => <b key={j}>{v}</b>)}
                  </LegendRow>
                ))}
              </LegendTable>
              <LegendScroll />
            </LegendArea>
          </Panel>
        </Row>
        <Row $h={200}>
          <Panel $w={941}>
            <PanelTitle>Cell reports</PanelTitle>
            <ReportHead>
              {["Cell", "Throughput", "PEE.AvgPower", "DL Used PRBs ↓", "UL Used PRBs"].map((t) => (
                <ReportCell key={t}>{t}<Filter /></ReportCell>
              ))}
            </ReportHead>
          </Panel>
          <Panel $w={940.5}>
            <PanelTitle>Car-1 Throughput</PanelTitle>
            <ThroughputTick>0.0200</ThroughputTick>
          </Panel>
        </Row>
      </Main>
      <DashScroll />
      <WindowScroll><Arrow $color="#a3a3a3" $w={5.5} /></WindowScroll>
    </Page>
  );
}
